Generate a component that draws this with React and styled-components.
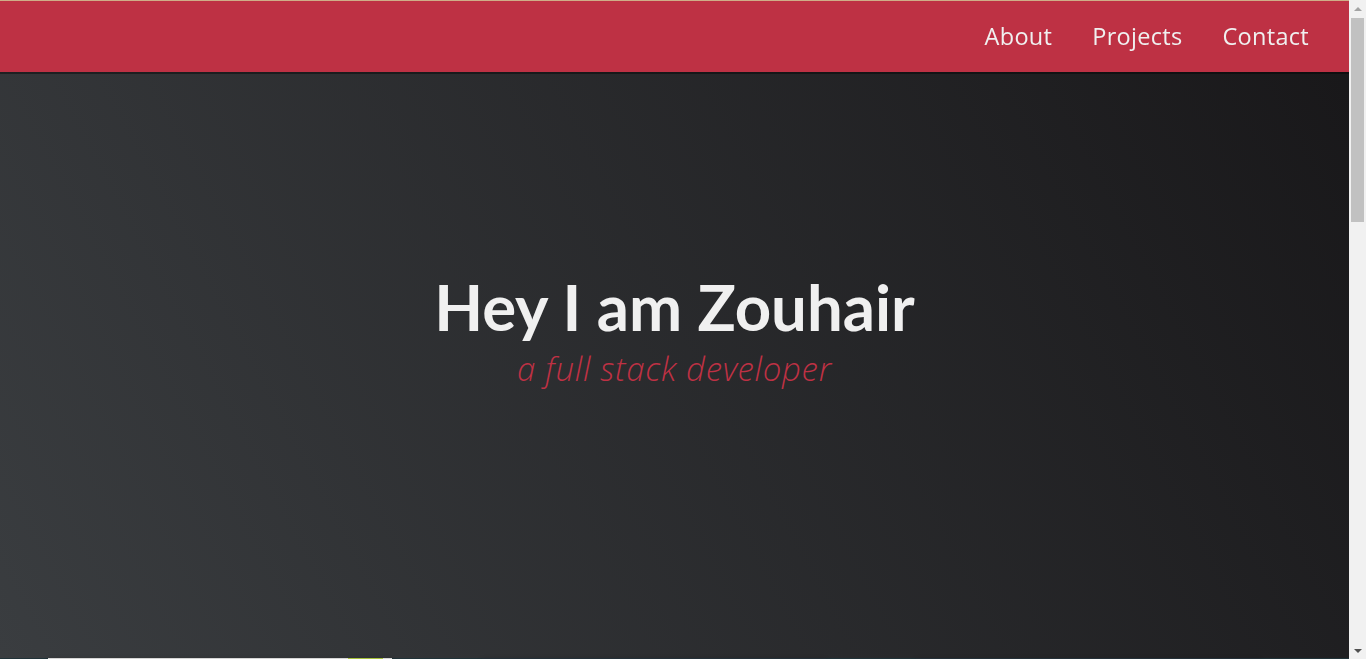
import React from "react";
import styled, { createGlobalStyle } from "styled-components";

const GlobalStyle = createGlobalStyle`
  html, body {
    margin: 0;
    padding: 0;
  }
  body {
    font-family: "Open Sans", "Liberation Sans", sans-serif;
    background: #213339;
    color: #f0f0f0;
  }
`;

const projects = [
  { title: "Tribute Page", tone: "#d6d6d6", leaf: true },
  { title: "Random Quote Machine", tone: "#243038" },
  { title: "JavaScript Calculator", tone: "#243038" },
  { title: "Map Data Across the Globe", tone: "#d3d3d3", leaf: true },
  { title: "Wikipedia Viewer", tone: "#c6cbcf" },
  { title: "Tic Tac Toe Game", tone: "#d0d0d0" },
];

const App = () => {
  return (
    <>
      <GlobalStyle />
      <Page>
        <Nav>
          <NavList>
            <li>
              <NavLink href="#about">About</NavLink>
            </li>
            <li>
              <NavLink href="#projects">Projects</NavLink>
            </li>
            <li>
              <NavLink href="#contact">Contact</NavLink>
            </li>
          </NavList>
        </Nav>

        <Welcome id="about">
          <Title>Hey I am Zouhair</Title>
          <Subtitle>a full stack developer</Subtitle>
        </Welcome>

        <Projects id="projects">
          <Grid>
            {projects.map((p) => (
              <Card key={p.title}>
                <Thumb $tone={p.tone}>{p.leaf && <Leaf />}</Thumb>
                <CardTitle>{p.title}</CardTitle>
              </Card>
            ))}
          </Grid>
        </Projects>

        <Contact id="contact">
          <ContactTitle>Let's work together...</ContactTitle>
          <ContactText>How do you take your coffee?</ContactText>
        </Contact>
      </Page>

      {/* browser scrollbar as seen in the screenshot */}
      <ScrollTrack>
        <Arrow $dir="up" />
        <Thumb2 />
        <Spacer />
        <Arrow $dir="down" />
      </ScrollTrack>
    </>
  );
};

const Page = styled.div`
  margin-right: 17px;
`;

const Nav = styled.nav`
  position: fixed;
  top: 0;
  left: 0;
  right: 17px;
  z-index: 10;
  height: 71px;
  display: flex;
  justify-content: flex-end;
  align-items: center;
  background: #be3144;
  border-top: 1px solid #cfae88;
  box-shadow: 0 2px 0 rgba(0, 0, 0, 0.4);
`;

const NavList = styled.ul`
  display: flex;
  list-style: none;
  margin: 0 20px 0 0;
  padding: 0;
`;

const NavLink = styled.a`
  display: block;
  padding: 0 20px;
  font-family: "Open Sans", "Liberation Sans", sans-serif;
  font-size: 23.5px;
  letter-spacing: 0.3px;
  color: #f0f0f0;
  text-decoration: none;
  line-height: 65px;
`;

const Welcome = styled.section`
  height: 658px;
  display: flex;
  flex-direction: column;
  justify-content: center;
  align-items: center;
  background: linear-gradient(62deg, #3a3d40 0%, #181719 100%);
`;

const Title = styled.h1`
  margin: 0;
  font-family: "Lato", "Liberation Sans", sans-serif;
  font-weight: 700;
  font-size: 63.5px;
  line-height: 1.2;
  color: #f0f0f0;
`;

const Subtitle = styled.p`
  margin: 4px 0 0;
  font-family: "Open Sans", "Liberation Sans", sans-serif;
  font-weight: 300;
  font-style: italic;
  font-size: 33px;
  letter-spacing: 0.7px;
  line-height: 1.2;
  color: #be3144;
`;

const Projects = styled.section`
  padding: 0 48px 120px;
  background: #213339;
`;

const Grid = styled.div`
  display: grid;
  grid-template-columns: repeat(3, 344px);
  gap: 60px 90px;
`;

const Card = styled.a`
  display: block;
  background: #303841;
  box-shadow: 0 2px 5px rgba(0, 0, 0, 0.3);
`;

const Thumb = styled.div`
  height: 250px;
  position: relative;
  background: ${(p) => p.$tone};
`;

const Leaf = styled.div`
  position: absolute;
  top: 0;
  right: 9px;
  width: 35px;
  height: 22px;
  background: #a6c13a;
  border-radius: 0 0 14px 14px;
`;

const CardTitle = styled.p`
  margin: 0;
  padding: 24px 8px;
  text-align: center;
  font-size: 20px;
  color: #f0f0f0;
`;

const Contact = styled.section`
  height: 460px;
  display: flex;
  flex-direction: column;
  justify-content: center;
  align-items: center;
  background: #303841;
`;

const ContactTitle = styled.h2`
  margin: 0;
  font-family: "Lato", "Liberation Sans", sans-serif;
  font-size: 56px;
`;

const ContactText = styled.p`
  margin: 8px 0 0;
  font-style: italic;
  font-size: 22px;
`;

const ScrollTrack = styled.div`
  position: fixed;
  top: 0;
  right: 0;
  bottom: 0;
  width: 17px;
  z-index: 20;
  display: flex;
  flex-direction: column;
  align-items: center;
  background: #f1f1f1;
`;

const Arrow = styled.div`
  flex: none;
  height: 17px;
  width: 17px;
  display: flex;
  align-items: center;
  justify-content: center;

  &::before {
    content: "";
    border-left: 4px solid transparent;
    border-right: 4px solid transparent;
    ${(p) =>
      p.$dir === "up"
        ? "border-bottom: 4px solid #a3a3a3;"
        : "border-top: 4px solid #505050;"}
  }
`;

const Thumb2 = styled.div`
  flex: none;
  width: 13px;
  height: 204px;
  margin-top: 1px;
  background: #c1c1c1;
`;

const Spacer = styled.div`
  flex: 1;
`;

export default App;
